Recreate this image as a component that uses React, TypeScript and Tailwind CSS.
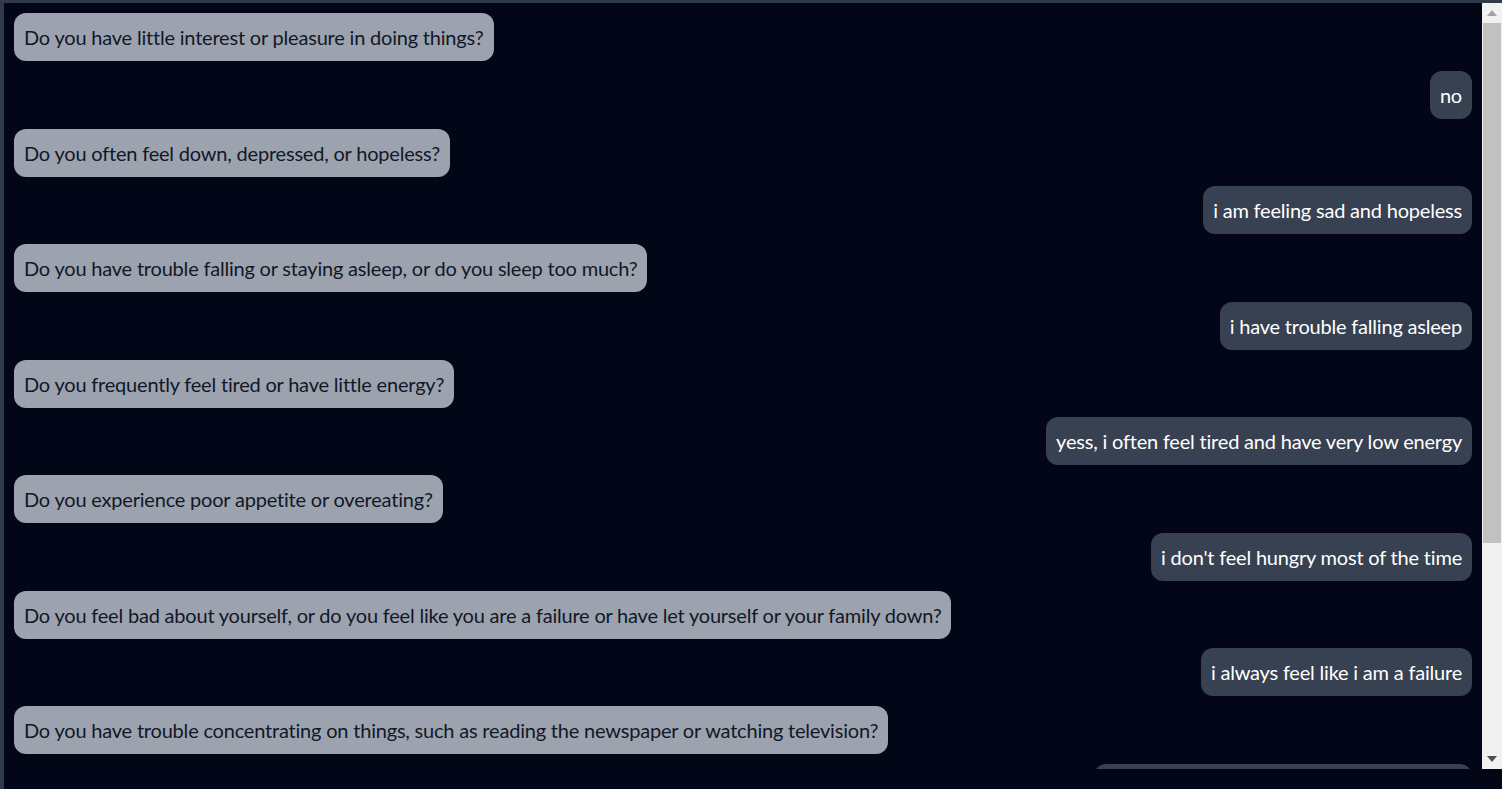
const messages: { from: 'bot' | 'user'; text: string }[] = [
  { from: 'bot', text: 'Do you have little interest or pleasure in doing things?' },
  { from: 'user', text: 'no' },
  { from: 'bot', text: 'Do you often feel down, depressed, or hopeless?' },
  { from: 'user', text: 'i am feeling sad and hopeless' },
  { from: 'bot', text: 'Do you have trouble falling or staying asleep, or do you sleep too much?' },
  { from: 'user', text: 'i have trouble falling asleep' },
  { from: 'bot', text: 'Do you frequently feel tired or have little energy?' },
  { from: 'user', text: 'yess, i often feel tired and have very low energy' },
  { from: 'bot', text: 'Do you experience poor appetite or overeating?' },
  { from: 'user', text: "i don't feel hungry most of the time" },
  {
    from: 'bot',
    text: 'Do you feel bad about yourself, or do you feel like you are a failure or have let yourself or your family down?',
  },
  { from: 'user', text: 'i always feel like i am a failure' },
  {
    from: 'bot',
    text: 'Do you have trouble concentrating on things, such as reading the newspaper or watching television?',
  },
  { from: 'user', text: 'i find it very hard to concentrate on things' },
];

function Bubble({ from, text }: { from: 'bot' | 'user'; text: string }) {
  const bot = from === 'bot';
  return (
    <div className={bot ? 'flex justify-start' : 'flex justify-end'}>
      <div
        className={
          bot
            ? 'rounded-xl bg-[#9ca3af] px-2.5 py-2.5 text-[20px] leading-7 tracking-[-0.2px] text-[#111827] whitespace-nowrap'
            : 'rounded-xl bg-[#374151] px-2.5 py-2.5 text-[20px] leading-7 tracking-[-0.2px] text-white whitespace-nowrap'
        }
      >
        {text}
      </div>
    </div>
  );
}

// Windows-style scrollbar as seen in the capture
function Scrollbar() {
  return (
    <div className="flex w-[20px] shrink-0 flex-col bg-[#f1f1f1]">
      <div className="flex h-[20px] items-center justify-center">
        <svg width="10" height="6" viewBox="0 0 10 6" aria-hidden>
          <path d="M0 6 L5 0 L10 6 Z" fill="#a3a3a3" />
        </svg>
      </div>
      <div className="mx-[1px] h-[520px] bg-[#c1c1c1]" />
      <div className="flex-1" />
      <div className="flex h-[20px] items-center justify-center">
        <svg width="10" height="6" viewBox="0 0 10 6" aria-hidden>
          <path d="M0 0 L10 0 L5 6 Z" fill="#505050" />
        </svg>
      </div>
    </div>
  );
}

export default function App() {
  return (
    <div className="h-[789px] w-full overflow-hidden bg-[#2f3b4d] pl-[4px] pt-[3px] font-['Lato','Noto_Sans',sans-serif]">
      <div className="flex h-full flex-col bg-[#030617]">
        <div className="flex h-[766px] shrink-0">
          <div className="flex min-w-0 flex-1 flex-col gap-[9.75px] overflow-hidden p-2.5">
            {messages.map((m, i) => (
              <Bubble key={i} from={m.from} text={m.text} />
            ))}
          </div>
          <Scrollbar />
        </div>
      </div>
    </div>
  );
}
